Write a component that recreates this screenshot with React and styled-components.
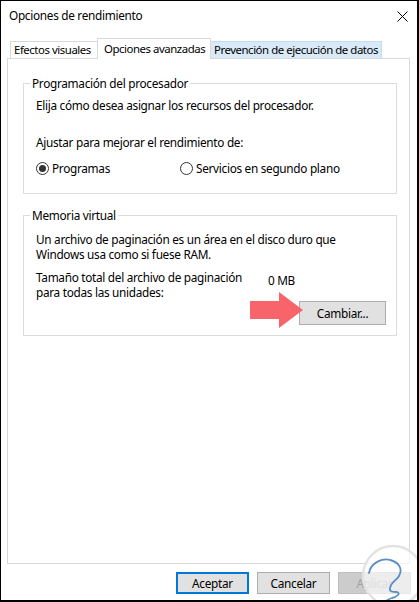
import React from "react";
import styled, { createGlobalStyle } from "styled-components";

const Global = createGlobalStyle`
  html, body { margin: 0; padding: 0; background: #fff; }
  body { font-family: "Noto Sans", "Segoe UI", sans-serif; font-size: 11.8px; letter-spacing: -0.3px; color: #000; }
  * { box-sizing: border-box; }
`;

const Window = styled.div`
  position: relative;
  width: 419px;
  height: 602px;
  border-top: 1px solid #000;
  border-left: 1px solid #000;
  border-right: 2px solid #000;
  border-bottom: 2px solid #000;
  background: #fff;
  display: flex;
  flex-direction: column;
  overflow: hidden;
`;

const TitleBar = styled.div`
  height: 37px;
  flex: none;
  display: flex;
  align-items: flex-start;
  justify-content: space-between;
  padding: 6px 9px 0 8px;
  line-height: 16px;
`;

const CloseIcon = styled.svg`
  margin-top: 4px;
`;

const TabStrip = styled.div`
  height: 20px;
  flex: none;
  display: flex;
  align-items: flex-end;
  padding-left: 9px;
  position: relative;
  z-index: 1;
  font-size: 11.4px;
  letter-spacing: -0.45px;
`;

const Tab = styled.div`
  width: ${(p) => p.$w}px;
  height: ${(p) => (p.$active ? 21 : 17)}px;
  margin-bottom: ${(p) => (p.$active ? -1 : 0)}px;
  margin-left: ${(p) => (p.$first ? 0 : -1)}px;
  border: 1px solid ${(p) => (p.$hover ? "#c5dbf0" : "#d9d9d9")};
  border-bottom: none;
  background: ${(p) => (p.$active ? "#fff" : p.$hover ? "#d8e9f8" : "#fff")};
  padding: ${(p) => (p.$active ? "2px 0 0 6px" : "0 0 0 3px")};
  line-height: 15px;
  white-space: nowrap;
  position: relative;
  z-index: ${(p) => (p.$active ? 2 : 1)};
`;

const Panel = styled.div`
  flex: none;
  height: 506px;
  margin: 0 7px 0 6px;
  border: 1px solid #d9d9d9;
  padding: 16px 12px 0 15px;
  display: flex;
  flex-direction: column;
`;

const Group = styled.fieldset`
  margin: ${(p) => p.$mt || 0}px 0 0 0;
  padding: 0;
  border: 1px solid #dcdcdc;
  min-width: 0;
`;

const Legend = styled.legend`
  margin-left: 6px;
  padding: 0 2px;
  line-height: 16px;
`;

const GroupBody = styled.div`
  padding: ${(p) => p.$pad};
  display: flex;
  flex-direction: column;
`;

const Text = styled.div`
  line-height: ${(p) => p.$lh || 16}px;
  margin-top: ${(p) => p.$mt || 0}px;
`;

const RadioRow = styled.div`
  display: flex;
  margin-top: 10px;
  line-height: 16px;
`;

const RadioOption = styled.label`
  display: flex;
  align-items: center;
  width: ${(p) => p.$w || "auto"};
`;

const RadioCircle = styled.span`
  width: 13px;
  height: 13px;
  border: 1px solid #333;
  border-radius: 50%;
  margin-right: 3px;
  display: flex;
  align-items: center;
  justify-content: center;
  flex: none;
  &::after {
    content: "";
    width: 7px;
    height: 7px;
    border-radius: 50%;
    background: #333;
    display: ${(p) => (p.$checked ? "block" : "none")};
  }
`;

const SizeRow = styled.div`
  display: flex;
  margin-top: 8px;
  line-height: 15px;
`;

const SizeLabel = styled.div`
  width: 232px;
  flex: none;
`;

const SizeValue = styled.div`
  margin-top: 3px;
`;

const ButtonRow = styled.div`
  display: flex;
  justify-content: flex-end;
  margin-top: 1px;
`;

const ButtonWrap = styled.div`
  position: relative;
`;

const Button = styled.button`
  width: ${(p) => p.$w}px;
  height: ${(p) => p.$h}px;
  font-family: inherit;
  font-size: inherit;
  letter-spacing: inherit;
  color: ${(p) => (p.disabled ? "#a0a0a0" : "#000")};
  background: ${(p) => (p.disabled ? "#cccccc" : "#e1e1e1")};
  border: ${(p) => (p.$default ? "2px solid #0078d7" : p.disabled ? "1px solid #bfbfbf" : "1px solid #adadad")};
  padding: 0;
  margin: 0;
  line-height: 14px;
  display: flex;
  align-items: center;
  justify-content: center;
`;

const Arrow = styled.svg`
  position: absolute;
  left: -49px;
  top: -9px;
  pointer-events: none;
`;

const Footer = styled.div`
  flex: 1;
  display: flex;
  justify-content: flex-end;
  align-items: flex-start;
  gap: 8px;
  padding: 8px 6px 0 0;
`;

const Watermark = styled.svg`
  position: absolute;
  right: -6px;
  bottom: -8px;
  pointer-events: none;
`;

export default function App() {
  return (
    <>
      <Global />
      <Window>
        <TitleBar>
          <span>Opciones de rendimiento</span>
          <CloseIcon width="11" height="11" viewBox="0 0 11 11">
            <path d="M0.5 0.5 L10.5 10.5 M10.5 0.5 L0.5 10.5" stroke="#000" strokeWidth="1" fill="none" />
          </CloseIcon>
        </TitleBar>
        <TabStrip>
          <Tab $w={88} $first>Efectos visuales</Tab>
          <Tab $w={114} $active>Opciones avanzadas</Tab>
          <Tab $w={172} $hover>Prevención de ejecución de datos</Tab>
        </TabStrip>
        <Panel>
          <Group>
            <Legend>Programación del procesador</Legend>
            <GroupBody $pad="6px 12px 17px 12px">
              <Text>Elija cómo desea asignar los recursos del procesador.</Text>
              <Text $mt={21}>Ajustar para mejorar el rendimiento de:</Text>
              <RadioRow>
                <RadioOption $w="144px">
                  <RadioCircle $checked />
                  Programas
                </RadioOption>
                <RadioOption>
                  <RadioCircle />
                  Servicios en segundo plano
                </RadioOption>
              </RadioRow>
            </GroupBody>
          </Group>
          <Group $mt={13}>
            <Legend>Memoria virtual</Legend>
            <GroupBody $pad="9px 10px 10px 12px">
              <Text $lh={15}>
                Un archivo de paginación es un área en el disco duro que
                <br />
                Windows usa como si fuese RAM.
              </Text>
              <SizeRow>
                <SizeLabel>
                  Tamaño total del archivo de paginación
                  <br />
                  para todas las unidades:
                </SizeLabel>
                <SizeValue>0 MB</SizeValue>
              </SizeRow>
              <ButtonRow>
                <ButtonWrap>
                  <Button $w={87} $h={24}>Cambiar...</Button>
                  <Arrow width="54" height="37" viewBox="0 0 54 37">
                    <path d="M0 9 H29 V0 L53 18 L29 36 V27 H0 Z" fill="#f7646a" />
                  </Arrow>
                </ButtonWrap>
              </ButtonRow>
            </GroupBody>
          </Group>
        </Panel>
        <Footer>
          <Button $w={73} $h={22} $default>Aceptar</Button>
          <Button $w={73} $h={22}>Cancelar</Button>
          <Button $w={73} $h={22} disabled>Aplicar</Button>
        </Footer>
        <Watermark width="64" height="68" viewBox="0 0 64 68">
          <circle cx="34" cy="36" r="30" fill="rgba(255,255,255,0.65)" stroke="#e3e3e3" strokeWidth="2.5" />
          <path
            d="M10 33 C12 22 24 18 31 20 C40 22 44 29 40 36 C37 41 32 42 31 48 C30 52 34 52 38 52 C42 53 38 57 33 58 C30 59 28 60 27 61"
            fill="none"
            stroke="#5a8fc4"
            strokeWidth="1.8"
            strokeLinecap="round"
          />
        </Watermark>
      </Window>
    </>
  );
}
